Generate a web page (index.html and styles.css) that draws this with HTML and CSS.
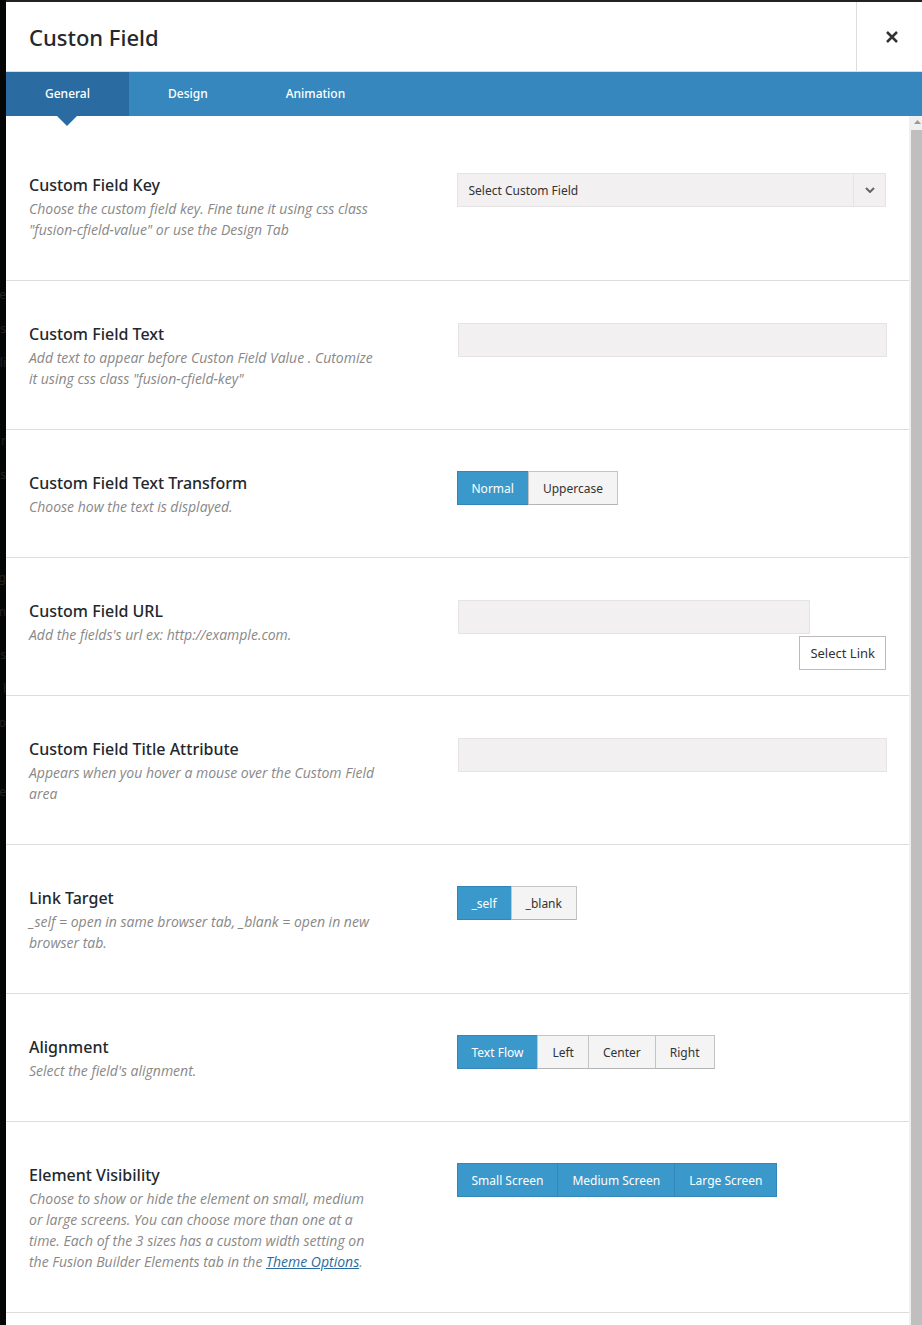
FILE: index.html
```html
<!DOCTYPE html>
<html lang="en">

<head>
    <meta charset="UTF-8">
    <title>Custon Field</title>
    <link rel="stylesheet" href="styles.css">
</head>

<body>
    <div class="backdrop" aria-hidden="true">
        <div class="page-menu">
            <span>ne</span>
            <span>es</span>
            <span>li</span>
        </div>
        <div class="page-menu">
            <span>r</span>
            <span>s</span>
        </div>
        <div class="page-menu">
            <span>g</span>
            <span>m</span>
        </div>
        <div class="page-menu">
            <span>s</span>
            <span>l</span>
            <span>o</span>
        </div>
        <div class="page-menu">
            <span>se</span>
        </div>
    </div>

    <div class="modal">
        <header class="modal-header">
            <h2>Custon Field</h2>
            <button class="close-btn" aria-label="Close">
                <svg width="14" height="14" viewBox="0 0 14 14">
                    <path d="M2 2L12 12M12 2L2 12" />
                </svg>
            </button>
        </header>

        <nav class="tabs">
            <a href="#general" class="tab active">General</a>
            <a href="#design" class="tab">Design</a>
            <a href="#animation" class="tab">Animation</a>
        </nav>

        <div class="modal-body">
            <form class="options" id="general">
                <div class="option">
                    <div class="option-details">
                        <label class="option-title" for="fieldKey">Custom Field Key</label>
                        <p>Choose the custom field key. Fine tune it using css class "fusion-cfield-value" or use the Design Tab</p>
                    </div>
                    <div class="option-field">
                        <div class="select-wrap">
                            <select id="fieldKey" name="fieldKey">
                                <option>Select Custom Field</option>
                            </select>
                            <span class="select-arrow">
                                <svg width="10" height="6" viewBox="0 0 10 6">
                                    <path d="M1 1L5 5L9 1" />
                                </svg>
                            </span>
                        </div>
                    </div>
                </div>

                <div class="option">
                    <div class="option-details">
                        <label class="option-title" for="fieldText">Custom Field Text</label>
                        <p>Add text to appear before Custon Field Value . Cutomize it using css class "fusion-cfield-key"</p>
                    </div>
                    <div class="option-field">
                        <input type="text" id="fieldText" name="fieldText">
                    </div>
                </div>

                <div class="option">
                    <div class="option-details">
                        <h3 class="option-title" id="transformTitle">Custom Field Text Transform</h3>
                        <p>Choose how the text is displayed.</p>
                    </div>
                    <div class="option-field">
                        <div class="button-set" role="group" aria-labelledby="transformTitle">
                            <button type="button" class="selected">Normal</button>
                            <button type="button">Uppercase</button>
                        </div>
                    </div>
                </div>

                <div class="option">
                    <div class="option-details">
                        <label class="option-title" for="fieldUrl">Custom Field URL</label>
                        <p>Add the fields's url ex: http://example.com.</p>
                    </div>
                    <div class="option-field link-field">
                        <input type="text" id="fieldUrl" name="fieldUrl">
                        <button type="button" class="link-btn">Select Link</button>
                    </div>
                </div>

                <div class="option">
                    <div class="option-details">
                        <label class="option-title" for="fieldTitle">Custom Field Title Attribute</label>
                        <p>Appears when you hover a mouse over the Custom Field area</p>
                    </div>
                    <div class="option-field">
                        <input type="text" id="fieldTitle" name="fieldTitle">
                    </div>
                </div>

                <div class="option">
                    <div class="option-details">
                        <h3 class="option-title" id="targetTitle">Link Target</h3>
                        <p>_self = open in same browser tab, _blank = open in new browser tab.</p>
                    </div>
                    <div class="option-field">
                        <div class="button-set" role="group" aria-labelledby="targetTitle">
                            <button type="button" class="selected">_self</button>
                            <button type="button">_blank</button>
                        </div>
                    </div>
                </div>

                <div class="option">
                    <div class="option-details">
                        <h3 class="option-title" id="alignTitle">Alignment</h3>
                        <p>Select the field's alignment.</p>
                    </div>
                    <div class="option-field">
                        <div class="button-set" role="group" aria-labelledby="alignTitle">
                            <button type="button" class="selected">Text Flow</button>
                            <button type="button">Left</button>
                            <button type="button">Center</button>
                            <button type="button">Right</button>
                        </div>
                    </div>
                </div>

                <div class="option">
                    <div class="option-details">
                        <h3 class="option-title" id="visibilityTitle">Element Visibility</h3>
                        <p>Choose to show or hide the element on small, medium or large screens. You can choose more than one at a time. Each of the 3 sizes has a custom width setting on the Fusion Builder Elements tab in the <a href="#theme-options">Theme Options</a>.</p>
                    </div>
                    <div class="option-field">
                        <div class="button-set" role="group" aria-labelledby="visibilityTitle">
                            <button type="button" class="selected">Small Screen</button>
                            <button type="button" class="selected">Medium Screen</button>
                            <button type="button" class="selected">Large Screen</button>
                        </div>
                    </div>
                </div>
            </form>

            <div class="scrollbar">
                <svg width="7" height="4" viewBox="0 0 7 4">
                    <path d="M0 4L3.500 0L7 4Z" />
                </svg>
                <div class="scroll-thumb"></div>
            </div>
        </div>
    </div>
</body>

</html>
```

FILE: styles.css
```css
* {
    box-sizing: border-box;
}

body {
    display: flex;
    height: 100vh;
    margin: 0;
    padding-top: 2px;
    overflow: hidden;
    background-color: #222;
    font-family: "Segoe UI", "Noto Sans", sans-serif;
    font-size: 12px;
    color: #333;
}

button,
input,
select {
    font: inherit;
    color: inherit;
    border-radius: 0;
}

.backdrop {
    width: 6px;
    margin-top: -2px;
    padding-top: 278px;
    overflow: hidden;
    background-color: #040605;
    color: #222;
}

.page-menu {
    display: flex;
    flex-direction: column;
    align-items: flex-end;
    margin-bottom: 44px;
    line-height: 34px;
}

.page-menu:nth-child(2) {
    margin-bottom: 69px;
}

.page-menu:nth-child(3) {
    margin-bottom: 9px;
}

.page-menu:nth-child(4) {
    margin-bottom: 35px;
}

.modal {
    display: flex;
    flex: 1;
    flex-direction: column;
    min-width: 0;
    background-color: #fff;
}

.modal-header {
    display: flex;
    justify-content: space-between;
    height: 70px;
    border-bottom: 1px solid #ddd;
}

.modal-header h2 {
    margin: 0;
    padding-left: 23px;
    font-size: 22px;
    font-weight: 500;
    line-height: 70px;
    color: #23282d;
}

.close-btn {
    width: 66px;
    padding: 5px 0 0 5px;
    border: none;
    border-left: 1px solid #ddd;
    background: none;
    cursor: pointer;
}

.close-btn path {
    fill: none;
    stroke: #333;
    stroke-width: 2.5;
}

.tabs {
    display: flex;
    background-color: #3587bd;
}

.tab {
    position: relative;
    padding: 0 39px;
    line-height: 44px;
    font-weight: 500;
    color: #fff;
    text-decoration: none;
}

.tab.active {
    background-color: #2a6ca2;
}

.tab.active::after {
    content: "";
    position: absolute;
    top: 100%;
    left: 50%;
    margin-left: -10px;
    border: 10px solid transparent;
    border-top-color: #2a6ca2;
    border-bottom: none;
}

.modal-body {
    display: flex;
    flex: 1;
    min-height: 0;
}

.options {
    flex: 1;
    padding-top: 16px;
}

.option {
    display: flex;
    padding: 41px 23px 25px;
    border-bottom: 1px solid #ddd;
}

.option-details {
    width: 50%;
    padding-bottom: 15px;
}

.option-title {
    display: block;
    margin: 0;
    font-size: 16px;
    font-weight: 500;
    line-height: 25px;
    color: #23282d;
}

.option-details p {
    width: 81%;
    margin: 0;
    font-family: "Segoe UI", "Open Sans", sans-serif;
    font-size: 14px;
    font-style: italic;
    line-height: 21px;
    color: #888;
}

.option-details a {
    color: #2a6ca2;
}

.option-field {
    flex: 1;
    margin-left: -1px;
}

.option-field input {
    display: block;
    width: 100%;
    height: 34px;
    margin: 1px;
    padding: 0 10px;
    border: 1px solid #e5e3e4;
    background-color: #f2f0f1;
}

.select-wrap {
    display: flex;
    height: 34px;
    border: 1px solid #e5e3e4;
    background-color: #f2f0f1;
}

.select-wrap select {
    flex: 1;
    padding: 1px 10px 0 11px;
    border: none;
    background: none;
    appearance: none;
}

.select-arrow {
    display: flex;
    align-items: center;
    justify-content: center;
    width: 32px;
    border-left: 1px solid #e5e3e4;
}

.select-arrow path {
    fill: none;
    stroke: #666;
    stroke-width: 2;
}

.button-set {
    display: flex;
}

.button-set button {
    height: 34px;
    padding: 0 14px;
    border: 1px solid #c4c4c4;
    border-bottom-color: #b4b4b4;
    background-color: #f4f4f4;
    cursor: pointer;
}

.button-set button + button {
    margin-left: -1px;
}

.button-set .selected {
    border-color: #3387b8;
    background-color: #3b98ca;
    color: #fff;
}

.link-field input {
    width: 82%;
}

.link-btn {
    display: block;
    height: 34px;
    margin: 2px 0 0 auto;
    padding: 0 10px;
    border: 1px solid #bbb;
    background-color: #fff;
    font-size: 13px;
    cursor: pointer;
}

.scrollbar {
    display: flex;
    flex-direction: column;
    width: 13px;
    padding: 4px 0 0 2px;
    background-color: #f0f0f0;
}

.scrollbar svg {
    margin: 0 0 6px 3px;
    fill: #999;
}

.scroll-thumb {
    flex: 1;
    background-color: #bfbfbf;
}
```
